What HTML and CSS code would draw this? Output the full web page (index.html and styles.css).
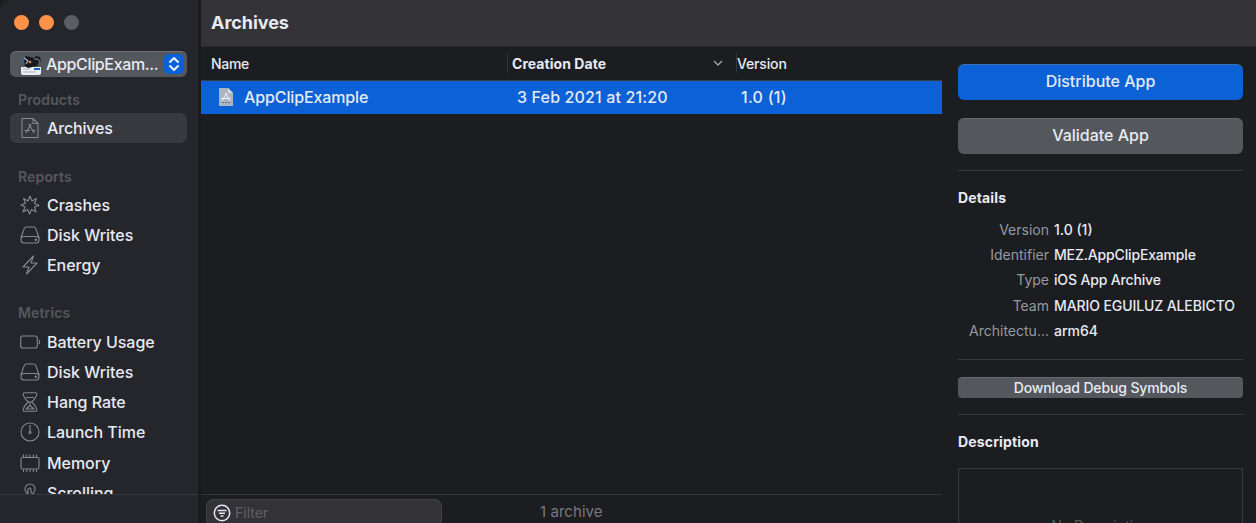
FILE: index.html
```html
<!DOCTYPE html>
<html lang="en">
<head>
<meta charset="utf-8">
<title>Archives</title>
<link rel="stylesheet" href="styles.css">
</head>
<body>
<svg class="defs" width="0" height="0">
  <symbol id="disk" viewBox="0 0 20 20"><path d="M1 12.500 4.300 3.400Q4.800 2 6.300 2H13.700Q15.200 2 15.700 3.400L19 12.500V15Q19 18 16 18H4Q1 18 1 15V14Q1 11.500 4 11.500H16Q19 11.500 19 14"/><circle cx="15.800" cy="14.800" r=".7"/></symbol>
</svg>
<div class="window">
  <aside class="sidebar">
    <div class="lights"><i></i><i></i><i class="off"></i></div>
    <div class="picker">
      <svg class="app-icon" viewBox="0 0 20 20"><path d="M0 12H20V18Q20 20 18 20H2Q0 20 0 18Z" fill="#e9eef5"/><path d="M4 11 3 4 5 1 9 2 13 3 15 1 19 2 20 7 18 7 16 11 7 13Z" fill="#17191e"/><path d="M3 3 7 6 5 9" stroke="#a8b6c8" stroke-width="1.200" fill="none"/><circle cx="9" cy="7" r="1.300" fill="#d98c5d"/><path d="M13 4h4l2 3" stroke="#8793a2" fill="none"/><path d="M13 14h6" stroke="#1264cf" stroke-width="2"/><path d="M2 14h7M2 17h13" stroke="#aab3c0"/><path d="M1 4v3" stroke="#1264cf"/></svg>
      <span class="picker-name">AppClipExam...</span>
      <svg class="stepper" viewBox="0 0 20 20"><path d="M6 8 10 4 14 8M6 12 10 16 14 12"/></svg>
    </div>
    <h2>Products</h2>
    <div class="item selected"><svg class="icon" viewBox="0 0 20 20"><path d="M2 .5H13L18 5.500V19.500H2ZM13 .5V5.500H18M9 6 14 15M11 6 6 15M4.500 12.500H10M12 12.500H15.500"/></svg><span>Archives</span></div>
    <h2 class="reports">Reports</h2>
    <div class="item"><svg class="icon" viewBox="0 0 20 20"><path d="M10 1 12 6 16.500 3.500 14.500 8.500 19 10.500 14.500 12 16 17 11.500 14.500 9.500 19 7.500 14.500 3 17 5 12 1 10 5.500 8.200 3.500 3.500 8 6Z"/></svg><span>Crashes</span></div>
    <div class="item"><svg class="icon"><use href="#disk"/></svg><span>Disk Writes</span></div>
    <div class="item"><svg class="icon" viewBox="0 0 20 20"><path d="M13.500 1 3 12H9L6.500 19 17 8H11Z"/></svg><span>Energy</span></div>
    <h2 class="metrics">Metrics</h2>
    <div class="item"><svg class="icon" viewBox="0 0 20 20"><rect x=".7" y="4" width="16.600" height="12" rx="2"/><path d="M19 8Q20.500 10 19 12"/></svg><span>Battery Usage</span></div>
    <div class="item"><svg class="icon"><use href="#disk"/></svg><span>Disk Writes</span></div>
    <div class="item hang"><svg class="icon" viewBox="0 0 20 20"><path d="M4.500 .8H15.500Q17 .8 16.800 2.200Q16 6.500 11.500 10Q16 13.500 16.800 17.800Q17 19.200 15.500 19.200H4.500Q3 19.200 3.200 17.800Q4 13.500 8.500 10Q4 6.500 3.200 2.200Q3 .8 4.500 .8ZM6 5.500H14M10 9V14M6 17 10 13.500 14 17Z"/></svg><span>Hang Rate</span></div>
    <div class="item"><svg class="icon" viewBox="0 0 20 20"><circle cx="10" cy="10" r="9"/><path d="M10 3V10"/><circle cx="10" cy="10.500" r="1"/></svg><span>Launch Time</span></div>
    <div class="item"><svg class="icon" viewBox="0 0 20 20"><rect x="1" y="4.500" width="18" height="11.500" rx="1.500"/><path d="M3.500 1.500V4M6.700 1.500V4M10 1.500V4M13.300 1.500V4M16.500 1.500V4M3.500 16.500V19M6.700 16.500V19M10 16.500V19M13.300 16.500V19M16.500 16.500V19"/></svg><span>Memory</span></div>
    <div class="item last"><svg class="icon" viewBox="0 0 20 20"><path d="M6.500 9.500A5 5 0 1 1 13.500 9.500M8 12V6.500Q8 5 9.500 5T11 6.500V9.500L14 11 15 14V18M8 9 5.500 12 8 18"/></svg><span>Scrolling</span></div>
    <div class="sidebar-foot"></div>
  </aside>
  <main class="main">
    <header class="titlebar">Archives</header>
    <div class="content">
      <section class="archives">
        <div class="grid head">
          <span class="name">Name</span>
          <span class="date"><b>Creation Date</b><svg viewBox="0 0 10 6"><path d="M1 1 5 5 9 1"/></svg></span>
          <span class="version">Version</span>
        </div>
        <div class="grid row">
          <span class="name"><svg viewBox="0 0 14 18"><path d="M0 0H9L14 5V18H0Z" fill="#aab4c3"/><path d="M9 0V5H14" fill="#d6dbe2"/><path d="M7.500 5 3 13M6.500 5 11 13M2.500 10.500H11.500" stroke="#f0f3f7" fill="none"/><path d="M3 14.500h8" stroke="#697382" stroke-dasharray="2 1"/></svg><span class="archive-name">AppClipExample</span></span>
          <span class="date"><span class="when">3 Feb 2021 at 21:20</span></span>
          <span class="version"><span class="num">1.0 (1)</span></span>
        </div>
        <footer class="footer">
          <div class="filter"><svg viewBox="0 0 18 18"><circle cx="9" cy="9" r="7.700"/><path d="M4.500 6.500H13.500M6 9.300H12M7.500 12H10.500"/></svg><span>Filter</span></div>
          <span class="count">1 archive</span>
        </footer>
      </section>
      <aside class="inspector">
        <div class="button primary"><span>Distribute App</span></div>
        <div class="button"><span>Validate App</span></div>
        <hr>
        <h3 class="details-title"><span>Details</span></h3>
        <dl>
          <dt>Version</dt><dd>1.0 (1)</dd>
          <dt>Identifier</dt><dd class="tight">MEZ.AppClipExample</dd>
          <dt>Type</dt><dd class="tight">iOS App Archive</dd>
          <dt>Team</dt><dd class="team">MARIO EGUILUZ ALEBICTO</dd>
          <dt>Architectu...</dt><dd>arm64</dd>
        </dl>
        <hr>
        <div class="button small"><span>Download Debug Symbols</span></div>
        <hr>
        <h3 class="description-title"><span>Description</span></h3>
        <div class="description">No Description</div>
      </aside>
    </div>
  </main>
</div>
</body>
</html>
```
FILE: styles.css
```css
* { box-sizing: border-box; }
body { margin: 0; background: #1c1d21; color: #e7eaf2; font-family: Inter, "Liberation Sans", sans-serif; }
.defs { position: absolute; }
svg { flex: none; }
.window { display: flex; width: 1256px; height: 523px; overflow: hidden; white-space: nowrap; border-top-left-radius: 10px; }
.sidebar { display: flex; flex-direction: column; flex: none; width: 201px; height: 523px; padding-top: 15px; overflow: hidden; background: #25262b; border-right: 3px solid #1a1b1f; }
.lights { display: flex; gap: 10px; height: 36px; padding-left: 14px; flex: none; }
.lights i { width: 15px; height: 15px; border-radius: 50%; background: #ff9248; }
.lights .off { background: #5b5e62; }
.picker { display: flex; align-items: center; flex: none; width: 177px; height: 26px; margin-left: 10px; padding: 0 2px 2px 11px; border-radius: 6px; background: #54575c; border-top: 1px solid #707277; font-size: 16px; font-weight: 500; }
.app-icon { width: 20px; height: 20px; margin: 2px 5px 0 0; }
.picker-name { width: 118px; letter-spacing: -.35px; }
.stepper { width: 20px; height: 20px; margin-top: 1px; border-radius: 5px; background: #0b61d8; fill: none; stroke: #edf2fa; stroke-width: 2; stroke-linecap: round; stroke-linejoin: round; }
h2 { flex: none; height: 35.5px; margin: 0; padding: 13px 0 0 18px; font-size: 14px; line-height: 20px; font-weight: 600; color: #56585d; letter-spacing: .15px; }
.reports { height: 47px; padding-top: 24px; }
.metrics { height: 46.5px; padding-top: 23px; }
.item { display: flex; align-items: center; gap: 7px; flex: none; height: 30.2px; margin: 0 11px 0 10px; padding-left: 10px; font-size: 16px; font-weight: 500; letter-spacing: -.03px; }
.selected { background: #38393e; border-radius: 6px; letter-spacing: -.15px; }
.icon { width: 20px; height: 20px; fill: none; stroke: #85888d; stroke-width: 1.1; stroke-linejoin: round; }
.sidebar-foot { position: relative; flex: none; height: 40px; background: #25262b; border-top: 1px solid #37393d; }
.last { height: 30px; margin-bottom: -13.700px; }
.main { flex: 1; min-width: 0; }
.titlebar { height: 47px; padding-left: 10px; background: #343337; border-bottom: 1px solid #29292d; font-size: 18px; font-weight: 700; line-height: 46px; letter-spacing: -.05px; }
.content { display: flex; height: 476px; }
.archives { display: flex; flex-direction: column; width: 741px; }
.grid { display: grid; grid-template-columns: 306px 229px 1fr; align-items: center; }
.grid > span { display: flex; align-items: center; }
.head { height: 34px; padding-bottom: 1px; font-size: 14px; font-weight: 500; border-bottom: 1px solid #3b3c40; }
.head .name { padding-left: 10px; letter-spacing: -.3px; }
.head .date, .head .version { height: 20px; padding-left: 4px; border-left: 1px solid #34363a; }
.head .version { padding-left: 0; letter-spacing: -.15px; }
.head b { letter-spacing: .05px; }
.head svg { width: 10px; height: 6px; margin-left: 107px; fill: none; stroke: #a5a8ad; stroke-width: 1.3; }
.row { height: 33px; padding-bottom: 2px; background: #0b61d5; font-size: 16px; font-weight: 500; }
.row .name { padding-left: 18px; gap: 11px; }
.row .name svg { width: 14px; height: 18px; margin-top: 1px; }
.archive-name { letter-spacing: -.12px; }
.row .date { padding-left: 10px; letter-spacing: .15px; }
.row .version { padding-left: 5px; letter-spacing: .25px; }
.footer { display: flex; height: 29px; margin-top: auto; border-top: 1px solid #35373b; }
.filter { display: flex; align-items: center; gap: 4px; width: 236px; height: 28px; margin: 4px 0 0 5px; padding: 0 0 1px 6px; background: #333337; border: 1px solid #404145; border-radius: 7px; color: #5e6166; font-size: 14px; }
.filter svg { width: 18px; height: 18px; fill: none; stroke: #e3e8f2; stroke-width: 1.5; }
.count { margin: 7px 0 0 98px; color: #76797e; font-size: 15px; line-height: 20px; letter-spacing: .05px; }
.inspector { width: 302px; height: 476px; overflow: hidden; padding: 17px 0 0 16px; }
.button { display: flex; align-items: center; justify-content: center; width: 285px; height: 36px; margin-bottom: 18px; padding-bottom: 3px; border-radius: 6px; background: #54575b; font-size: 16px; font-weight: 500; border-top: 1px solid #66696d; }
.primary { background: #0b61d5; border-top-color: #3a70b8; }
hr { width: 285px; height: 1px; margin: 0; border: 0; background: #393a3e; }
.inspector .button + hr { margin-top: 16px; }
.inspector .button:not(.small) + hr { margin-top: -2px; }
h3 { margin: 0; font-size: 14px; font-weight: 700; line-height: 20px; letter-spacing: .15px; }
.details-title { margin-top: 17px; }
dl { display: grid; grid-template-columns: 91px 1fr; column-gap: 5px; grid-auto-rows: 25.2px; align-items: center; margin: 9px 0 16px; font-size: 14px; }
dt { text-align: right; color: #96999f; }
dd { margin: 0; font-weight: 500; }
.tight { letter-spacing: -.16px; }
.team { letter-spacing: -.1px; }
.button.small { height: 21px; margin: 17px 0 16px; padding-bottom: 1px; border-radius: 4px; font-size: 14px; letter-spacing: -.13px; }
.description-title { margin-top: 17px; }
.description { width: 285px; height: 90px; margin-top: 16px; padding-top: 47px; border: 1px solid #393a3e; color: #56585d; text-align: center; font-size: 14px; line-height: 20px; }
```
